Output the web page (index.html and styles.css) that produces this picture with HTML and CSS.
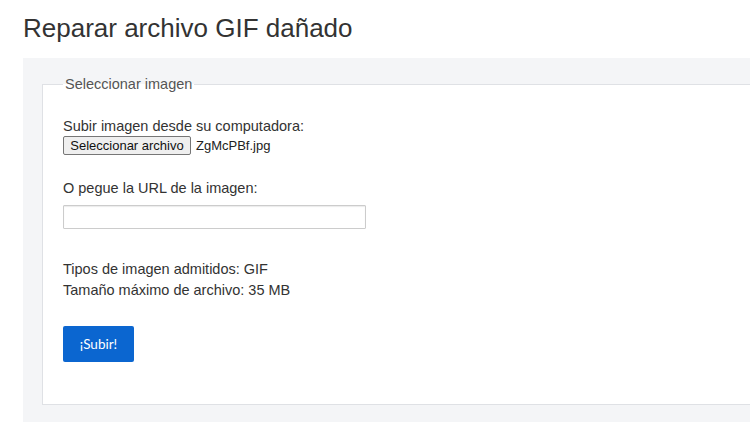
FILE: index.html
```html
<!DOCTYPE html>
<html lang="es">

<head>
  <meta charset="UTF-8" />
  <meta name="viewport" content="width=device-width, initial-scale=1.0" />
  <title>Reparar archivo GIF dañado</title>
  <link rel="stylesheet" href="styles.css">
</head>

<body>

  <main>

    <h1>Reparar archivo GIF dañado</h1>

    <div class="panel">
      <fieldset>
        <legend>Seleccionar imagen</legend>

        <div class="field">
          <label>Subir imagen desde su computadora:</label>
          <div class="file-row">
            <button type="button" class="file-btn">Seleccionar archivo</button>
            <span class="file-name">ZgMcPBf.jpg</span>
          </div>
        </div>

        <div class="field field-url">
          <label for="url">O pegue la URL de la imagen:</label>
          <input type="text" id="url" />
        </div>

        <div class="info">
          <div>Tipos de imagen admitidos: GIF</div>
          <div>Tamaño máximo de archivo: 35 MB</div>
        </div>

        <button type="button" class="submit">¡Subir!</button>
      </fieldset>
    </div>

  </main>

</body>

</html>
```

FILE: styles.css
```css
* {
    box-sizing: border-box;
}
html {
    margin: 0;
    padding: 0;
    overflow: hidden;
}
body {
    margin: 0;
    padding: 0;
    background: #fff;
    color: #333;
    font-family: "Liberation Sans", Arial, sans-serif;
    font-size: 14.5px;
    line-height: 20px;
}
main {
    padding: 0 0 0 23px;
}
main h1 {
    margin: 0;
    padding: 13px 0 0;
    height: 58px;
    font-size: 26px;
    font-weight: 400;
    line-height: 30px;
    color: #333;
}
.panel {
    padding: 18px 0 30px 19px;
    background: #f4f5f7;
}
fieldset {
    margin: 0;
    padding: 0 20px 42px;
    background: #fff;
    border: 1px solid #dfe1e5;
    border-right: 0;
}
legend {
    margin: 0;
    padding: 0 2px;
    color: #555;
    font-size: 14.5px;
    line-height: 16px;
}
.field {
    margin-top: 24px;
}
.field label {
    display: block;
}
.file-row {
    display: flex;
    align-items: center;
    gap: 5px;
    margin-top: 0;
    height: 19px;
}
.file-btn {
    margin: 0;
    padding: 0 6px;
    height: 19px;
    width: 128px;
    font-family: inherit;
    font-size: 13px;
    color: #111;
    background: #efefef;
    border: 1px solid #767676;
    border-radius: 2px;
}
.file-name {
    font-size: 13px;
    line-height: 19px;
    color: #222;
}
.field-url {
    margin-top: 23px;
}
.field-url input {
    display: block;
    margin-top: 7px;
    width: 303px;
    height: 24px;
    border: 1px solid #ccc;
    border-radius: 1px;
    box-shadow: inset 0 1px 1px rgba(0, 0, 0, 0.08);
    outline: 0;
}
.info {
    margin-top: 30px;
    line-height: 21px;
}
.submit {
    display: block;
    margin: 25px 0 0;
    padding: 0;
    width: 71px;
    height: 36px;
    color: #fff;
    font-family: Lato, "Liberation Sans", sans-serif;
    font-size: 13.5px;
    background: #0b66d0;
    border: 0;
    border-radius: 2px;
    cursor: pointer;
}
```
